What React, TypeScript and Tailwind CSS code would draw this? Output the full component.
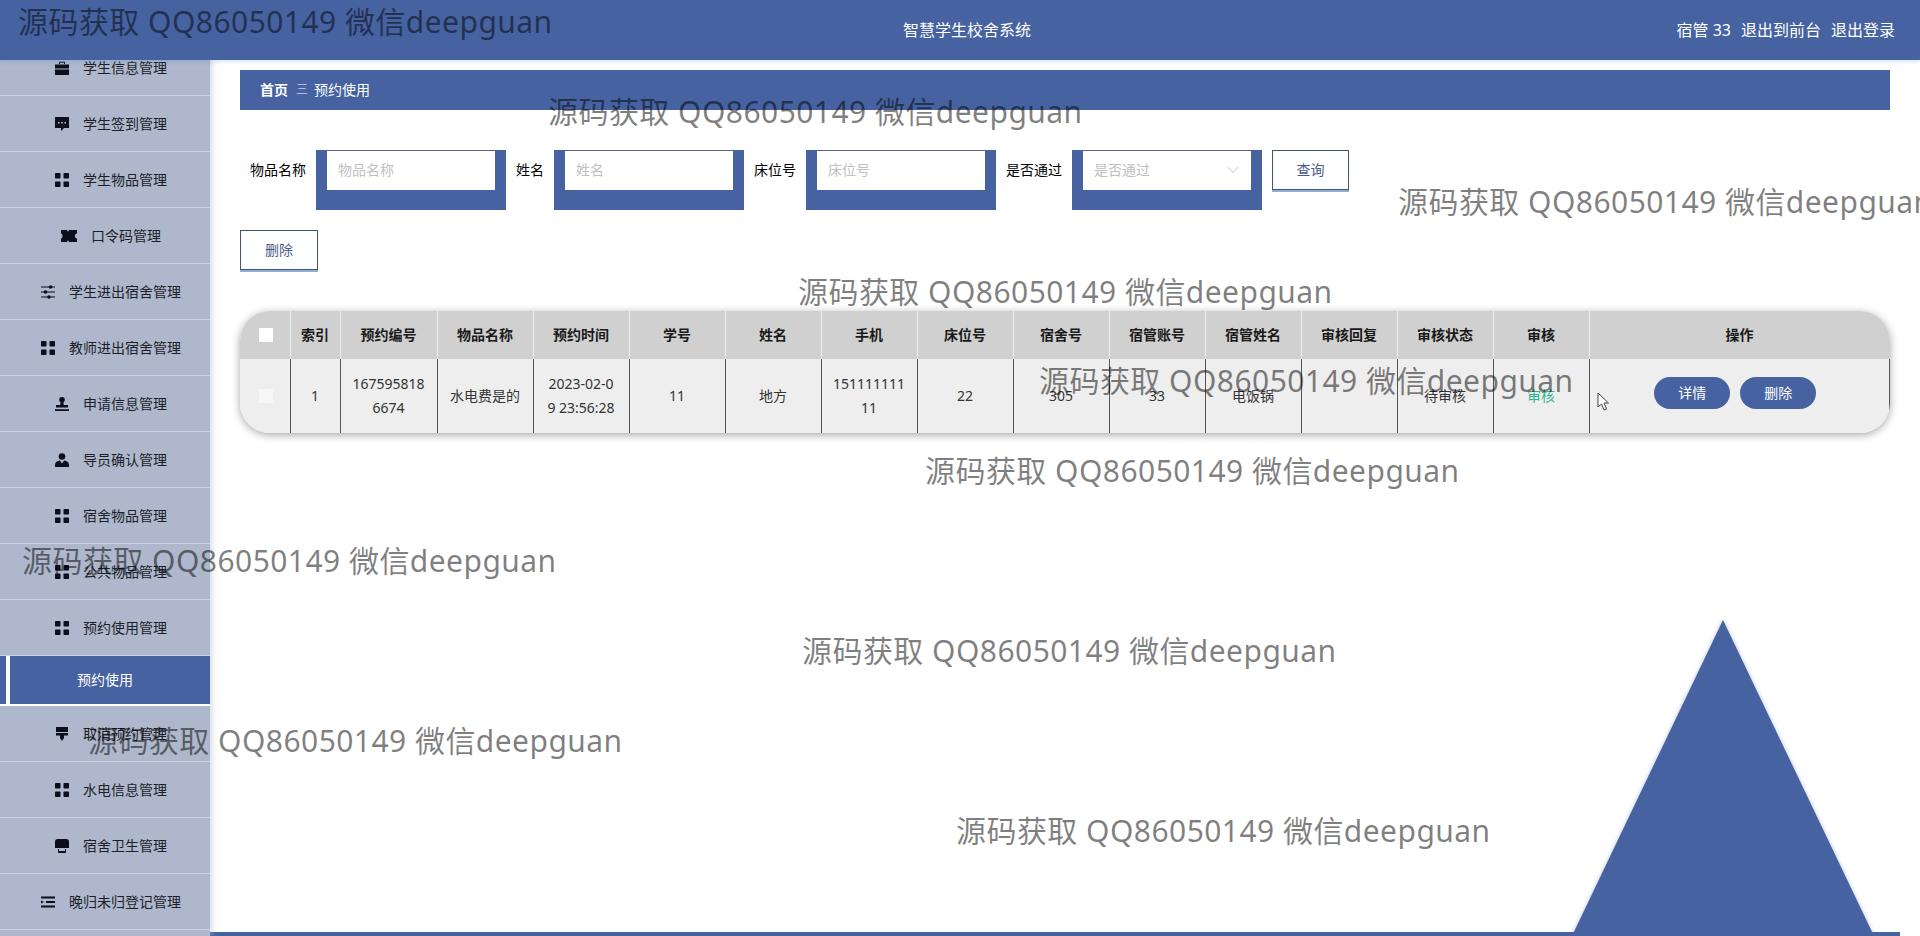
const FONT = "font-['Noto_Sans','Noto_Sans_CJK_SC',sans-serif]";

function GridIcon() {
  return (
    <svg viewBox="0 0 14 14" className="w-3.5 h-3.5 shrink-0" fill="#0b0f1c">
      <rect x="0" y="0" width="5.5" height="5.5" rx="0.8" />
      <rect x="8.5" y="0" width="5.5" height="5.5" rx="0.8" />
      <rect x="0" y="8.5" width="5.5" height="5.5" rx="0.8" />
      <rect x="8.5" y="8.5" width="5.5" height="5.5" rx="0.8" />
    </svg>
  );
}

function CaseIcon() {
  return (
    <svg viewBox="0 0 14 14" className="w-3.5 h-3.5 shrink-0" fill="#0b0f1c">
      <path d="M4 3V.8h6V3h-1V1.8H5V3z" />
      <path d="M0 3.500h14v4H0zM0 8.500h14V14H0z" />
    </svg>
  );
}

function ChatIcon() {
  return (
    <svg viewBox="0 0 14 14" className="w-3.5 h-3.5 shrink-0" fill="#0b0f1c">
      <path fillRule="evenodd" d="M0 0h14v11H9l-3 3v-3H0zM3 5v1.600h1.600V5zM6.200 5v1.600h1.600V5zM9.400 5v1.600H11V5z" />
    </svg>
  );
}

function TicketIcon() {
  return (
    <svg viewBox="0 0 16 14" className="w-4 h-3.5 shrink-0" fill="#0b0f1c">
      <path d="M0 1h6l1 2 1-2h8v3.500c-1.500 0-2 1-2 2.500s.5 2.500 2 2.500V13H8l-1-2-1 2H0V9.500c1 0 1.500-1 1.500-2.500S1 4.500 0 4.500z" />
    </svg>
  );
}

function SliderIcon() {
  return (
    <svg viewBox="0 0 14 14" className="w-3.5 h-3.5 shrink-0" fill="#0b0f1c">
      <path d="M0 1.500h14v1H0zM0 6.500h14v1H0zM0 11.500h14v1H0z" />
      <circle cx="9.500" cy="2" r="1.800" />
      <circle cx="4.500" cy="7" r="1.800" />
      <circle cx="8" cy="12" r="1.800" />
    </svg>
  );
}

function StampIcon() {
  return (
    <svg viewBox="0 0 14 14" className="w-3.5 h-3.5 shrink-0" fill="#0b0f1c">
      <circle cx="7" cy="2.800" r="2.800" />
      <path d="M5.800 5h2.400l.6 3H13v2.500H1V8h4.200zM0 12.300h14V14H0z" />
    </svg>
  );
}

function UserIcon() {
  return (
    <svg viewBox="0 0 14 14" className="w-3.5 h-3.5 shrink-0" fill="#0b0f1c">
      <circle cx="7" cy="3.500" r="3.300" />
      <path d="M0 14v-2.500C0 9.500 2.500 8 4.800 7.600L7 10.500l2.200-2.900C11.500 8 14 9.500 14 11.500V14z" />
    </svg>
  );
}

function BrushIcon() {
  return (
    <svg viewBox="0 0 14 14" className="w-3.5 h-3.5 shrink-0" fill="#0b0f1c">
      <path d="M1 0h12v5H1zM1 6h12v2.500H9V11l-2 3-2-3V8.500H1z" />
    </svg>
  );
}

function BucketIcon() {
  return (
    <svg viewBox="0 0 14 14" className="w-3.5 h-3.5 shrink-0" fill="#0b0f1c">
      <path d="M2.500 0h9c1.500 0 2.500 1 2.500 2.500V9H0V2.500C0 1 1 0 2.500 0z" />
      <path d="M3 10h1v2h6v-2h1v3c0 .6-.4 1-1 1H4c-.6 0-1-.4-1-1z" />
    </svg>
  );
}

function IndentIcon() {
  return (
    <svg viewBox="0 0 14 14" className="w-3.5 h-3.5 shrink-0" fill="#0b0f1c">
      <path d="M0 1.500h14v2H0zM5 6h9v2H5zM0 10.500h14v2H0zM0 5.500L3 7 0 8.500z" />
    </svg>
  );
}

const topMenu = [
  { icon: CaseIcon, label: "学生信息管理" },
  { icon: ChatIcon, label: "学生签到管理" },
  { icon: GridIcon, label: "学生物品管理" },
  { icon: TicketIcon, label: "口令码管理" },
  { icon: SliderIcon, label: "学生进出宿舍管理" },
  { icon: GridIcon, label: "教师进出宿舍管理" },
  { icon: StampIcon, label: "申请信息管理" },
  { icon: UserIcon, label: "导员确认管理" },
  { icon: GridIcon, label: "宿舍物品管理" },
  { icon: GridIcon, label: "公共物品管理" },
  { icon: GridIcon, label: "预约使用管理" },
];

const bottomMenu = [
  { icon: BrushIcon, label: "取消预约管理" },
  { icon: GridIcon, label: "水电信息管理" },
  { icon: BucketIcon, label: "宿舍卫生管理" },
  { icon: IndentIcon, label: "晚归未归登记管理" },
];

const columns = ["索引", "预约编号", "物品名称", "预约时间", "学号", "姓名", "手机", "床位号", "宿舍号", "宿管账号", "宿管姓名", "审核回复", "审核状态", "审核"];
const row = ["1", "167595818\n6674", "水电费是的", "2023-02-0\n9 23:56:28", "11", "地方", "151111111\n11", "22", "305", "33", "电饭锅", "", "待审核"];

const watermarks = [
  "left-[18px] top-[2px]",
  "left-[548px] top-[92px]",
  "left-[1398px] top-[182px]",
  "left-[798px] top-[272px]",
  "left-[1039px] top-[361px]",
  "left-[925px] top-[451px]",
  "left-[22px] top-[541px]",
  "left-[802px] top-[631px]",
  "left-[88px] top-[721px]",
  "left-[956px] top-[811px]",
];

function MenuRow({ item }: { item: { icon: () => React.ReactElement; label: string } }) {
  const Icon = item.icon;
  return (
    <div className="h-14 shrink-0 flex items-center justify-center gap-3.5 pl-3 text-sm text-[#1c1f2a] border-b border-[#ccd3e2]">
      <Icon />
      <span>{item.label}</span>
    </div>
  );
}

function SearchField({ label, labelWidth, select }: { label: string; labelWidth: string; select?: boolean }) {
  return (
    <div className="flex">
      <label className={`${labelWidth} h-10 leading-10 text-sm text-black text-right pr-2.5`}>{label}</label>
      <div className="w-[190px] h-[60px] bg-[#4662a0] px-[11px]">
        <div className="h-10 bg-white border-t border-[#5a6478] flex items-center justify-between pl-[11px] pr-3 pb-0.5 text-sm text-[#c0c0c0]">
          <span>{label}</span>
          {select && (
            <svg viewBox="0 0 12 8" className="w-3 h-2" fill="none" stroke="#c4c8d0" strokeWidth="1">
              <path d="M1 1l5 5.500L11 1" />
            </svg>
          )}
        </div>
      </div>
    </div>
  );
}

export default function App() {
  return (
    <div className={`relative h-[936px] w-full overflow-hidden bg-white ${FONT}`}>
      <header className="relative z-10 h-[60px] bg-[#4662a0] flex items-center justify-center text-white shadow-[0_2px_4px_rgba(70,130,200,0.2)]">
        <span className="text-base ml-3.5">智慧学生校舍系统</span>
        <div className="absolute right-[25px] top-0 h-[60px] flex items-center gap-2.5 text-base">
          <span>宿管 33</span>
          <span>退出到前台</span>
          <span>退出登录</span>
        </div>
      </header>

      <div className="flex h-[876px]">
        <aside className="w-[210px] shrink-0 bg-[#aeb7cc] overflow-hidden flex flex-col -mt-5 relative z-[5] shadow-[2px_0_6px_rgba(174,183,204,0.5)]">
          {topMenu.map((item) => (
            <MenuRow key={item.label} item={item} />
          ))}
          <div className="h-[50px] shrink-0 border-b-[2px] border-white flex">
            <div className="w-1.5 bg-[#4662a0]" />
            <div className="w-1 bg-white" />
            <div className="flex-1 bg-[#4662a0] flex items-center justify-center text-sm text-white pr-2.5">预约使用</div>
          </div>
          {bottomMenu.map((item) => (
            <MenuRow key={item.label} item={item} />
          ))}
        </aside>

        <main className="flex-1 pl-[30px] pr-[30px] pt-2.5 relative">
          <div className="h-10 bg-[#4662a0] flex items-center pl-5 text-sm text-white">
            <span className="font-bold">首页</span>
            <span className="ml-2 mr-1.5 text-xs font-light">三</span>
            <span>预约使用</span>
          </div>

          <div className="flex items-start mt-10 gap-0">
            <SearchField label="物品名称" labelWidth="w-[76px]" />
            <SearchField label="姓名" labelWidth="w-[48px]" />
            <SearchField label="床位号" labelWidth="w-[62px]" />
            <SearchField label="是否通过" labelWidth="w-[76px]" select />
            <button className="ml-2.5 w-[77px] h-10 bg-white border border-[#44546f] shadow-[0_2px_0_#8fb0d4] text-sm text-[#4b5a8a]">查询</button>
          </div>

          <button className="mt-5 block w-[78px] h-10 bg-white border border-[#44546f] shadow-[0_2px_0_#8fb0d4] text-sm text-[#4b5a8a]">删除</button>

          <div className="mt-[41px] w-[1650px] rounded-[30px] overflow-hidden shadow-[0_2px_8px_rgba(0,0,0,0.35)]">
            <table className="w-[1650px] table-fixed border-collapse text-sm">
              <colgroup>
                <col className="w-[50px]" />
                <col className="w-[50px]" />
                <col className="w-[97px]" />
                {columns.slice(2).map((c) => (
                  <col key={c} className="w-[96px]" />
                ))}
                <col />
              </colgroup>
              <thead>
                <tr className="h-12 bg-[#d0d0d0] text-[#1a1a1a]">
                  <th className="border-r border-[#ececec] pl-0.5">
                    <span className="block mx-auto w-3.5 h-3.5 bg-white rounded-[1px]" />
                  </th>
                  {columns.map((c) => (
                    <th key={c} className="border-r border-[#ececec] font-bold">{c}</th>
                  ))}
                  <th className="font-bold">操作</th>
                </tr>
              </thead>
              <tbody>
                <tr className="h-[74px] bg-[#eeeeee] text-[#333]">
                  <td className="border-r border-[#555] pl-0.5">
                    <span className="block mx-auto w-3.5 h-3.5 bg-[#f7f7f7] rounded-[1px]" />
                  </td>
                  {row.map((v, i) => (
                    <td key={i} className="border-r border-[#555] text-center leading-6 px-2 whitespace-pre-line">{v}</td>
                  ))}
                  <td className="border-r border-[#555] text-center text-[#2eb88a] px-2.5">审核</td>
                  <td className="border-r border-[#555]">
                    <div className="flex justify-center gap-2.5 pb-1.5 pr-2">
                      <button className="w-[76px] h-8 rounded-2xl bg-[#4662a0] text-white text-sm">详情</button>
                      <button className="w-[76px] h-8 rounded-2xl bg-[#4662a0] text-white text-sm">删除</button>
                    </div>
                  </td>
                </tr>
              </tbody>
            </table>
          </div>

          <svg viewBox="0 0 302 316" className="absolute left-[1362px] top-[560px] w-[302px] h-[316px] drop-shadow-[0_0_2px_rgba(70,98,160,0.4)]" fill="#4662a0">
            <path d="M151 0L302 316H0z" />
          </svg>
          <div className="absolute left-0 bottom-0 w-[1690px] h-1 bg-[#4662a0]" />
        </main>
      </div>

      {watermarks.map((pos) => (
        <div key={pos} className={`absolute ${pos} z-20 whitespace-nowrap text-[30px] leading-10 tracking-[0.45px] text-black/50 pointer-events-none`}>
          源码获取 QQ86050149 微信deepguan
        </div>
      ))}

      {/* mouse pointer caught in the screenshot */}
      <svg viewBox="0 0 13 19" className="absolute left-[1597px] top-[392px] z-20 w-[13px] h-[19px]" fill="#fff" stroke="#444" strokeWidth="1">
        <path d="M1 1v14l3.500-3 2.500 6 2.500-1-2.500-6h4.500z" />
      </svg>
    </div>
  );
}
